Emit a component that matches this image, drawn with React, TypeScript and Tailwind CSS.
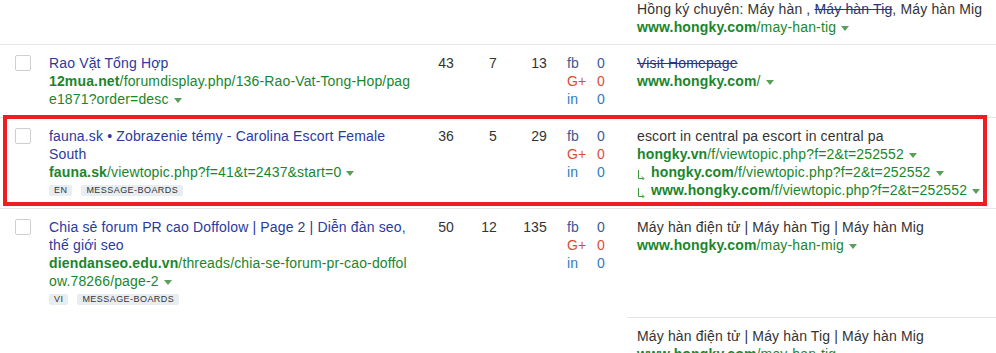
import React from "react";

const Caret = () => (
  <svg width="8" height="5" viewBox="0 0 8 5" className="inline-block ml-[5px] align-middle">
    <path d="M0 0h8L4 5z" fill="#5a9e5a" />
  </svg>
);

const Redir = () => (
  <svg width="9" height="10" viewBox="0 0 9 10" className="inline-block mr-[5px] align-[-3px]">
    <path d="M1.5 0v8.5h5" stroke="#3a9a3a" strokeWidth="1" fill="none" />
    <path d="M5 6.5l2 2-2 2" stroke="#3a9a3a" strokeWidth="1" fill="none" />
  </svg>
);

const Url = ({ domain, path, redir }: { domain: string; path: string; redir?: boolean }) => (
  <div className="text-[#1a862c] break-all">
    {redir && <Redir />}
    <span className="font-bold">{domain}</span>
    {path}
    <Caret />
  </div>
);

const Tag = ({ t }: { t: string }) => (
  <span className="inline-flex items-center h-[11px] px-[5px] mr-[9px] rounded-[2px] bg-[#e8edf2] text-[9px] leading-none tracking-[0.45px] text-[#333]">
    {t}
  </span>
);

const Social = () => (
  <div className="w-[80px] shrink-0 pl-[20px] pt-[9px]">
    <div className="flex text-[#3b5998]"><span className="w-[30px]">fb</span><span>0</span></div>
    <div className="flex text-[#dd4b39]"><span className="w-[30px]">G+</span><span>0</span></div>
    <div className="flex text-[#2f7bc2]"><span className="w-[30px]">in</span><span>0</span></div>
  </div>
);

const Nums = ({ a, b, c }: { a: string; b: string; c: string }) => (
  <>
    <div className="w-[43px] shrink-0 text-right pt-[9px] text-[#333]">{a}</div>
    <div className="w-[43px] shrink-0 text-right pt-[9px] text-[#333]">{b}</div>
    <div className="w-[50px] shrink-0 text-right pt-[9px] text-[#333]">{c}</div>
  </>
);

const Check = () => (
  <div className="w-[49px] shrink-0 pl-[15px] pt-[10px]">
    <div className="w-4 h-4 border border-[#cfcfcf] rounded-[2px] bg-white" />
  </div>
);

const Title = ({ children }: { children: React.ReactNode }) => (
  <div className="text-[#2a3a9e]">{children}</div>
);

const Tags = ({ lang }: { lang: string }) => (
  <div className="h-[18px] flex items-center tracking-normal">
    <Tag t={lang} />
    <Tag t="MESSAGE-BOARDS" />
  </div>
);

export default function App() {
  return (
    <div className="w-[996px] h-[353px] overflow-hidden bg-white font-['Liberation_Sans',Arial,sans-serif] text-[14px] leading-[18px] tracking-[0.15px]">
      {/* row 1 partial */}
      <div className="flex border-b border-[#e6e6e6]">
        <div className="w-[627px] shrink-0" />
        <div className="pl-[10px] pb-[8px]">
          <div className="text-[#333]">
            Hồng ký chuyên: Máy hàn , <span className="line-through text-[#2a3580]">Máy hàn Tig</span>, Máy hàn Mig
          </div>
          <Url domain="www.hongky.com" path="/may-han-tig" />
        </div>
      </div>

      {/* row 2 */}
      <div className="flex border-b border-[#e6e6e6]">
        <Check />
        <div className="w-[362px] shrink-0 pt-[9px] pb-[9px]">
          <Title>Rao Vặt Tổng Hợp</Title>
          <Url domain="12mua.net" path="/forumdisplay.php/136-Rao-Vat-Tong-Hop/page1871?order=desc" />
        </div>
        <Nums a="43" b="7" c="13" />
        <Social />
        <div className="flex-1 pl-[10px] pt-[9px]">
          <div className="line-through text-[#2a3580]">Visit Homepage</div>
          <Url domain="www.hongky.com" path="/" />
        </div>
      </div>

      {/* row 3 */}
      <div className="relative flex border-b border-[#e6e6e6]">
        <Check />
        <div className="w-[362px] shrink-0 pt-[9px] pb-[9px]">
          <Title>fauna.sk • Zobrazenie témy - Carolina Escort Female South</Title>
          <Url domain="fauna.sk" path="/viewtopic.php?f=41&t=2437&start=0" />
          <Tags lang="EN" />
        </div>
        <Nums a="36" b="5" c="29" />
        <Social />
        <div className="flex-1 pl-[10px] pt-[9px] pb-[9px]">
          <div className="text-[#333]">escort in central pa escort in central pa</div>
          <Url domain="hongky.vn" path="/f/viewtopic.php?f=2&t=252552" />
          <Url redir domain="hongky.com" path="/f/viewtopic.php?f=2&t=252552" />
          <Url redir domain="www.hongky.com" path="/f/viewtopic.php?f=2&t=252552" />
        </div>
        <div className="absolute left-[3px] right-[9px] top-[-3px] bottom-[2px] border-[4px] border-[#ee1c24] pointer-events-none" />
      </div>

      {/* row 4 */}
      <div className="flex">
        <Check />
        <div className="w-[362px] shrink-0 pt-[9px] pb-[9px]">
          <Title>Chia sẻ forum PR cao Doffolow | Page 2 | Diễn đàn seo, thế giới seo</Title>
          <Url domain="diendanseo.edu.vn" path="/threads/chia-se-forum-pr-cao-doffolow.78266/page-2" />
          <Tags lang="VI" />
        </div>
        <Nums a="50" b="12" c="135" />
        <Social />
        <div className="flex-1 flex flex-col">
          <div className="h-[109px] pl-[10px] pt-[9px] border-b border-[#e6e6e6]">
            <div className="text-[#333]">Máy hàn điện tử | Máy hàn Tig | Máy hàn Mig</div>
            <Url domain="www.hongky.com" path="/may-han-mig" />
          </div>
          <div className="pl-[10px] pt-[9px]">
            <div className="text-[#333]">Máy hàn điện tử | Máy hàn Tig | Máy hàn Mig</div>
            <Url domain="www.hongky.com" path="/may-han-tig" />
          </div>
        </div>
      </div>
    </div>
  );
}
